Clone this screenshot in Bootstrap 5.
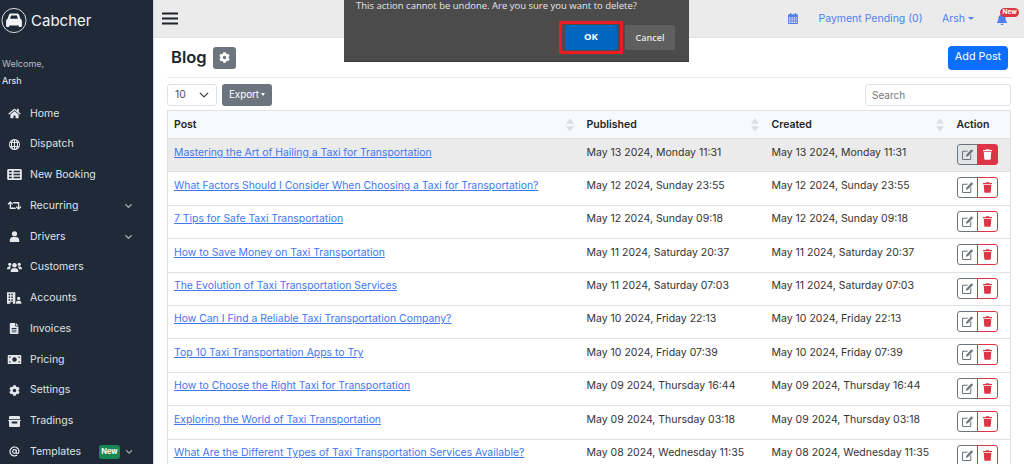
<!DOCTYPE html>
<html lang="en">
<head>
<meta charset="utf-8">
<title>Blog</title>
<link href="https://cdn.jsdelivr.net/npm/bootstrap@5.3.0/dist/css/bootstrap.min.css" rel="stylesheet">
<style>
html,body{height:464px;overflow:hidden}
body{font-family:"Inter","Liberation Sans",sans-serif;font-size:10.5px;color:#212529;background:#fff}
.shell{height:464px}
.side{width:154px;flex:none;background:#1f2937;color:#e5e7eb;border-right:1px solid #d8d8d8;overflow:hidden}
.side > *{flex:none}
.brand{height:38px;padding:2px 0 0 1px;gap:4px;color:#f3f4f6;font-size:15px;line-height:1}
.welcome{padding:17px 0 0 2px;font-size:9px;line-height:17px;color:#b9bdc4}
.who{color:#eef0f2}
.menu{margin-top:9px}
.mitem{height:30.77px;flex:none;padding-left:7px;color:#dfe2e6;font-size:10.5px}
.mico{width:15px;height:11px;flex:none;margin-right:8px;fill:#e5e7eb}
.mico.tiny{height:9px}
.mico.tall{height:12px}
.chev{margin-left:auto;margin-right:20px;width:9px;height:9px;fill:none;stroke:#9ca3af;stroke-width:1.5}
.newtag{background:#198754;color:#fff;font-size:7.5px;font-weight:700;padding:3px 0;border-radius:3px;line-height:1.1;margin-left:18px;width:23px;text-align:center}
.newtag + .chev{margin-left:5px}
.mainp{min-width:0}
.topb{height:38px;flex:none;background:#ebebeb;border-bottom:1px solid #e2e3e6;padding-left:8px;color:#4f7ff0;font-size:10.5px}
.burger{width:16px;height:13px;stroke:#1f2328;stroke-width:2}
.tcal{width:10px;height:11px;fill:#4f7ff0;margin-left:auto}
.tpay{margin-left:20.5px}
.tuser{margin-left:19.5px}
.caretd{display:inline-block;border-top:3.5px solid #4f7ff0;border-left:3.5px solid transparent;border-right:3.5px solid transparent;margin-left:3px;vertical-align:2px}
.tbell{margin-left:23px;margin-right:17px;position:relative;width:10px;height:12px}
.tbell svg{width:10px;height:12px;fill:#4f7ff0;display:block}
.newdot{position:absolute;left:3px;top:-5px;background:#dc3545;color:#fff;font-size:6.5px;font-weight:700;padding:1.5px 2.5px;border-radius:5px;line-height:1}
.work{padding:0 13px 0 13px;overflow:hidden}
.headrow{height:40px;border-bottom:1px solid #e9ecef;padding:0 3px 0 4px}
.ttl{font-size:16.5px;font-weight:600;margin:0;line-height:1;color:#212529}
.gearb{width:23px;height:22px;padding:0;margin-left:6px;background:#6c757d;border-radius:3px;border:0}
.gearb svg{width:11px;height:11px;fill:#fff}
.addb{font-size:10.8px;padding:0;width:60px;height:24px;border-radius:4px;margin-left:auto;background:#0d6efd;border:0;color:#fff}
.tools{height:32px;padding-top:6px}
.pick{width:50px;height:22px;font-size:10.5px;padding:0 0 0 7px;border-radius:3px;color:#555;background-position:right 6px center;background-size:12px 10px;border-color:#dee2e6}
.expb{height:22px;width:50px;margin-left:5px;padding:0;font-size:9.8px;background:#6c757d;border:0;border-radius:3px;color:#fff}
.expb::after{margin-left:2px;vertical-align:2px;border-top-width:3px;border-left-width:2.5px;border-right-width:2.5px}
.srch{width:146px;height:22px;font-size:10px;padding:0 6px;margin-left:auto;border-radius:3px;border-color:#dee2e6}
.srch::placeholder{color:#777}
.blogt{width:844px;table-layout:fixed;margin:0;font-size:10.5px;border:1px solid #dee2e6;--bs-table-bg:transparent}
.blogt th{height:28px;padding:0 6px;background:#f8f9fa;font-weight:600;vertical-align:middle;position:relative;font-size:10.5px;border-bottom:1px solid #dee2e6}
.blogt td{height:33.4px;padding:5.5px 6px 0;vertical-align:top;color:#333;border-bottom:1px solid #dee2e6}
.blogt td a{color:#3f76f2;line-height:14px;font-size:10.4px}
.blogt tr.hot td{background:#ebebeb}
.sorter{position:absolute;right:7px;top:7px;width:8px;height:14px;fill:#dcdfe2}
.acts{margin-top:-.5px;display:flex}
.eb,.db{width:21px;height:21px;padding:0;display:flex;align-items:center;justify-content:center;background:#fff}
.eb{border:1px solid #6c757d;border-radius:3px 0 0 3px}
.db{border:1px solid #dc3545;border-left-width:1px;border-radius:0 3px 3px 0;margin-left:-1px}
.eb svg{width:11px;height:11px;fill:#6c757d}
.db svg{width:9px;height:11px;fill:#dc3545}
.hot .eb{background:#e4e5e6}
.hot .db{background:#dc3545}
.hot .db svg{fill:#fff}
.dlg{position:absolute;left:344px;top:0;width:345px;height:62px;background:#4b4b4b;color:#e6e6e6;font-family:"Open Sans","Liberation Sans",sans-serif;font-size:9.5px;border-bottom:1px solid #3a3a3a;z-index:5}
.dlgmsg{padding:0 0 0 12px;height:21px;line-height:12px}
.dlgbtns{padding:0 14px 0 0;justify-content:flex-end}
.okring{border:3px solid #ec1c24;padding:1px 3px;height:33px;margin-right:2px}
.okb{width:52px;height:25px;background:#0067c0;color:#fff;font-size:9.5px;font-weight:700;border:0;padding:0;border-radius:2px}
.canb{width:50px;height:25px;margin-top:4px;background:#5f5f5f;color:#e8e8e8;font-size:9px;font-weight:600;border:0;padding:0;border-radius:2px}
</style>
</head>
<body>
<svg width="0" height="0" class="position-absolute">
<defs>
<symbol id="i-home" viewBox="0 0 576 512"><path d="M280.37 148.26L96 300.11V464a16 16 0 0 0 16 16l112.06-.29a16 16 0 0 0 15.92-16V368a16 16 0 0 1 16-16h64a16 16 0 0 1 16 16v95.64a16 16 0 0 0 16 16.05L464 480a16 16 0 0 0 16-16V300L295.67 148.26a12.19 12.19 0 0 0-15.3 0zM571.6 251.47L488 182.56V44.05a12 12 0 0 0-12-12h-56a12 12 0 0 0-12 12v72.61L318.47 43a48 48 0 0 0-61 0L4.34 251.47a12 12 0 0 0-1.6 16.9l25.5 31A12 12 0 0 0 45.15 301l235.22-193.74a12.19 12.19 0 0 1 15.3 0L530.9 301a12 12 0 0 0 16.9-1.6l25.5-31a12 12 0 0 0-1.7-16.93z"/></symbol>
<symbol id="i-globe" viewBox="1 1 14 14"><path fill-rule="evenodd" d="M8 1a7 7 0 1 0 0 14A7 7 0 0 0 8 1zM7.3 2.6v2.3H5.2c.4-1 1.2-2 2.1-2.3zm1.4 0c.9.3 1.7 1.3 2.1 2.3H8.7zM3 4.9l1-1.2c-.1.4-.2.8-.3 1.2zm9.2 0c-.1-.4-.2-.8-.4-1.2L13 4.9zM2.3 6.2h1.2v3.6H2.3zm2.6 0h2.4v3.6H4.9zm3.8 0h2.4v3.6H8.7zm3.800 0h1.200v3.600h-1.200zM3 11.100h.7c.1.4.2.8.3 1.200zm2.200 0h2.100v2.300c-.9-.3-1.700-1.300-2.100-2.300zm3.500 0h2.100c-.4 1-1.200 2-2.100 2.300zm3.500 0h.8l-1 1.200c.1-.4.1-.8.2-1.200z"/></symbol>
<symbol id="i-list" viewBox="0 1 16 12"><path fill-rule="evenodd" d="M1.500 1h13A1.500 1.500 0 0 1 16 2.500v9a1.500 1.500 0 0 1-1.500 1.500h-13A1.500 1.500 0 0 1 0 11.500v-9A1.500 1.500 0 0 1 1.500 1zM2 3v1.600h3V3zm5 0v1.600h7V3zM2 6.200v1.600h3V6.200zm5 0v1.600h7V6.200zM2 9.400V11h3V9.400zm5 0V11h7V9.400z"/></symbol>
<symbol id="i-retweet" viewBox="0 0 640 512"><path d="M629.657 343.598L528.971 444.284c-9.373 9.372-24.568 9.372-33.941 0L394.343 343.598c-9.373-9.373-9.373-24.569 0-33.941l10.823-10.823c9.562-9.562 25.133-9.34 34.419.492L480 342.118V160H292.451a24.005 24.005 0 0 1-16.971-7.029l-16-16C244.361 121.851 255.069 96 276.451 96H520c13.255 0 24 10.745 24 24v222.118l40.416-43.792c9.285-9.831 24.856-10.054 34.419-.492l10.823 10.823c9.372 9.372 9.372 24.569-.001 33.941zm-265.138 15.431A23.999 23.999 0 0 0 347.548 352H160V169.881l40.416 43.792c9.286 9.831 24.856 10.054 34.419.491l10.822-10.822c9.373-9.373 9.373-24.569 0-33.941L144.971 67.716c-9.373-9.373-24.569-9.373-33.941 0L10.343 168.402c-9.373 9.373-9.373 24.569 0 33.941l10.822 10.822c9.562 9.562 25.133 9.34 34.419-.491L96 169.881V392c0 13.255 10.745 24 24 24h243.549c21.382 0 32.09-25.851 16.971-40.971l-16.001-16z"/></symbol>
<symbol id="i-user" viewBox="0 0 14 14"><circle cx="7" cy="3.500" r="3.300"/><path d="M1 14v-2.500C1 9.500 2.800 7.700 4.700 7.700h4.600C11.200 7.700 13 9.500 13 11.500V14z"/></symbol>
<symbol id="i-users" viewBox="0 0 18 14"><circle cx="9" cy="5" r="2.700"/><circle cx="3.300" cy="3.800" r="1.900"/><circle cx="14.700" cy="3.800" r="1.900"/><path d="M4.500 13v-1.500C4.500 9.800 5.800 8.500 7.300 8.500h3.400c1.500 0 2.800 1.300 2.800 3V13zM0 9.500C0 7.700 1 6.500 2.500 6.500h1.600c.4 0 .8.100 1.100.3C4.300 7.600 3.700 8.500 3.500 9.800H0zM18 9.500c0-1.800-1-3-2.500-3h-1.600c-.4 0-.8.100-1.100.3.900.8 1.500 1.700 1.700 3H18z"/></symbol>
<symbol id="i-build" viewBox="0 0 18 14"><path fill-rule="evenodd" d="M0 0h10v14H7v-2.500H4V14H0zM2 2v1.800h1.800V2zm3.200 0v1.800H7V2zM2 5.200V7h1.800V5.200zm3.200 0V7H7V5.200zM2 8.400v1.800h1.800V8.400zm3.200 0v1.800H7V8.400z"/><circle cx="14" cy="7.500" r="2"/><path d="M10.800 14v-1.500c0-1.300 1-2.300 2.200-2.300h2c1.200 0 2.200 1 2.200 2.300V14z"/></symbol>
<symbol id="i-file" viewBox="0 0 12 14"><path fill-rule="evenodd" d="M1.200 0H7v3.800c0 .4.300.7.700.7H11v8.300c0 .7-.5 1.200-1.200 1.200H1.200C.5 14 0 13.500 0 12.800V1.200C0 .5.500 0 1.200 0zM8 0l3 3.500H8zM2.500 6.500v1h6v-1zm0 2.200v1h6v-1zm0 2.200v1h6v-1z"/></symbol>
<symbol id="i-money" viewBox="0 0 18 12"><path fill-rule="evenodd" d="M1 0h16a1 1 0 0 1 1 1v10a1 1 0 0 1-1 1H1a1 1 0 0 1-1-1V1a1 1 0 0 1 1-1zm8 3a3 3 0 1 0 0 6 3 3 0 0 0 0-6zM2 2v2a2 2 0 0 0 2-2zm12 0a2 2 0 0 0 2 2V2zM2 8v2h2a2 2 0 0 0-2-2zm14 0a2 2 0 0 0-2 2h2z"/></symbol>
<symbol id="i-gear" viewBox="0 0 512 512"><path d="M487.4 315.7l-42.6-24.6c4.3-23.2 4.3-47 0-70.2l42.6-24.6c4.9-2.8 7.1-8.6 5.5-14-11.1-35.6-30-67.8-54.7-94.6-3.8-4.1-10-5.1-14.8-2.3L380.8 110c-17.9-15.4-38.5-27.3-60.8-35.1V25.800c0-5.600-3.900-10.500-9.400-11.700-36.700-8.200-74.300-7.800-109.200 0-5.500 1.200-9.400 6.100-9.400 11.700V75c-22.200 7.900-42.800 19.800-60.800 35.100L88.700 85.500c-4.900-2.800-11-1.900-14.800 2.300-24.700 26.700-43.600 58.900-54.700 94.600-1.700 5.400.6 11.200 5.500 14L67.300 221c-4.300 23.200-4.300 47 0 70.200l-42.600 24.600c-4.900 2.800-7.100 8.600-5.500 14 11.100 35.600 30 67.800 54.700 94.600 3.800 4.100 10 5.100 14.800 2.300l42.600-24.600c17.900 15.400 38.500 27.300 60.800 35.100v49.200c0 5.600 3.900 10.500 9.400 11.700 36.700 8.200 74.300 7.800 109.200 0 5.500-1.200 9.400-6.100 9.400-11.700v-49.200c22.200-7.900 42.800-19.800 60.800-35.100l42.600 24.600c4.900 2.800 11 1.900 14.800-2.300 24.700-26.700 43.600-58.900 54.700-94.600 1.500-5.500-.7-11.300-5.600-14.100zM256 336c-44.100 0-80-35.900-80-80s35.900-80 80-80 80 35.900 80 80-35.900 80-80 80z"/></symbol>
<symbol id="i-store" viewBox="0 0 16 14"><path fill-rule="evenodd" d="M2.500 0h11a1.500 1.500 0 0 1 1.500 1.500V4H1V1.500A1.500 1.500 0 0 1 2.500 0zM0 5h16v1.500h-1v6A1.500 1.500 0 0 1 13.500 14h-11A1.500 1.500 0 0 1 1 12.500v-6H0zm4.500 2v2.500h7V7z"/></symbol>
<symbol id="i-at" viewBox="0 0 16 16"><path fill="none" stroke="#e5e7eb" stroke-width="1.800" d="M10.600 8a2.600 2.600 0 1 1-5.200 0 2.600 2.600 0 0 1 5.200 0zM10.600 5.300V9c0 1.200.7 1.800 1.600 1.800 1.300 0 2.300-1.200 2.300-2.800A6.500 6.500 0 1 0 12 13.100"/></symbol>
<symbol id="i-cal" viewBox="0 0 12 13"><path fill-rule="evenodd" d="M2.500 0h1.500v1.500h4V0h1.500v1.500h1.300C11.500 1.500 12 2 12 2.700v9.100c0 .7-.5 1.200-1.200 1.200H1.200C.5 13 0 12.500 0 11.800V2.700c0-.7.500-1.200 1.200-1.200h1.300zM1 5v1.500h2V5zm3 0v1.500h1.800V5zm2.800 0v1.500H8.700V5zm2.900 0v1.500H11V5zM1 7.500V9h2V7.500zm3 0V9h1.800V7.500zm2.800 0V9H8.700V7.500zm2.900 0V9H11V7.500zM1 10v1.800h2V10zm3 0v1.800h1.800V10zm2.800 0v1.800H8.700V10zm2.900 0v1.800H11V10z"/></symbol>
<symbol id="i-bell" viewBox="0 0 14 16"><path d="M7 0c.6 0 1 .4 1 1v.7c2.300.4 4 2.400 4 4.800 0 3.700 1 4.800 2 5.900v1.100H0v-1.100c1-1.100 2-2.200 2-5.900 0-2.400 1.700-4.400 4-4.800V1c0-.6.400-1 1-1zM5 14.500h4a2 2 0 0 1-4 0z"/></symbol>
<symbol id="i-edit" viewBox="0 0 16 16"><path d="M14.600.9l.8.800a1.500 1.500 0 0 1 0 2.100L8.600 10.600l-3 .7.700-3L13 1.100a1.100 1.100 0 0 1 1.600-.2z"/><path d="M1.800 2.500H9l-1.500 1.500H2.200a.7.700 0 0 0-.7.700v9c0 .4.300.8.700.8h9c.4 0 .8-.4.800-.8V8.500l1.500-1.500v7a2 2 0 0 1-1.800 2H1.800A1.800 1.800 0 0 1 0 14.200V4.300a1.800 1.800 0 0 1 1.800-1.800z"/></symbol>
<symbol id="i-trash" viewBox="0 0 12 14"><path d="M4 0h4l.6 1H12v1.500H0V1h3.400zM1 3.500h10l-.7 9.400c0 .6-.6 1.100-1.200 1.100H2.900c-.6 0-1.200-.5-1.200-1.100z"/></symbol>
<symbol id="i-sort" viewBox="0 0 7 12"><path d="M3.500 0L7 5H0zM3.500 12L0 7h7z"/></symbol>
</defs>
</svg>

<div class="shell d-flex">
  <aside class="side d-flex flex-column">
    <div class="brand d-flex align-items-center">
      <svg width="26" height="27" viewBox="0 0 28 28"><circle cx="14" cy="14" r="13" fill="none" stroke="#e5e7eb" stroke-width="1"/><path fill="#f3f4f6" d="M10.500 6.500h7c1 0 1.700.6 2 1.500l1.300 4c1 .4 1.700 1.300 1.700 2.500V20c0 .6-.4 1-1 1h-1.500c-.6 0-1-.4-1-1v-.5H9V20c0 .6-.4 1-1 1H6.500c-.6 0-1-.4-1-1v-5.500c0-1.200.7-2.100 1.700-2.500l1.300-4c.3-.9 1-1.500 2-1.500zM10.800 8.500L9.800 12h8.400l-1-3.500z"/></svg>
      <span>Cabcher</span>
    </div>
    <div class="welcome">Welcome,<div class="who">Arsh</div></div>
    <nav class="menu d-flex flex-column">
      <a class="mitem d-flex align-items-center text-decoration-none"><svg class="mico"><use href="#i-home"/></svg>Home</a>
      <a class="mitem d-flex align-items-center text-decoration-none"><svg class="mico"><use href="#i-globe"/></svg>Dispatch</a>
      <a class="mitem d-flex align-items-center text-decoration-none"><svg class="mico"><use href="#i-list"/></svg>New Booking</a>
      <a class="mitem d-flex align-items-center text-decoration-none"><svg class="mico"><use href="#i-retweet"/></svg>Recurring<svg class="chev" viewBox="0 0 10 10"><path d="M1.500 3.500L5 7l3.500-3.500"/></svg></a>
      <a class="mitem d-flex align-items-center text-decoration-none"><svg class="mico"><use href="#i-user"/></svg>Drivers<svg class="chev" viewBox="0 0 10 10"><path d="M1.500 3.500L5 7l3.500-3.500"/></svg></a>
      <a class="mitem d-flex align-items-center text-decoration-none"><svg class="mico tall"><use href="#i-users"/></svg>Customers</a>
      <a class="mitem d-flex align-items-center text-decoration-none"><svg class="mico tall"><use href="#i-build"/></svg>Accounts</a>
      <a class="mitem d-flex align-items-center text-decoration-none"><svg class="mico"><use href="#i-file"/></svg>Invoices</a>
      <a class="mitem d-flex align-items-center text-decoration-none"><svg class="mico tiny"><use href="#i-money"/></svg>Pricing</a>
      <a class="mitem d-flex align-items-center text-decoration-none"><svg class="mico"><use href="#i-gear"/></svg>Settings</a>
      <a class="mitem d-flex align-items-center text-decoration-none"><svg class="mico"><use href="#i-store"/></svg>Tradings</a>
      <a class="mitem d-flex align-items-center text-decoration-none"><svg class="mico"><use href="#i-at"/></svg>Templates<span class="newtag">New</span><svg class="chev" viewBox="0 0 10 10"><path d="M1.500 3.500L5 7l3.500-3.500"/></svg></a>
    </nav>
  </aside>
  <div class="mainp flex-grow-1 d-flex flex-column">
    <header class="topb d-flex align-items-center">
      <svg class="burger" viewBox="0 0 16 13"><path d="M0 1.500h16M0 6.500h16M0 11.500h16"/></svg>
      <svg class="tcal"><use href="#i-cal"/></svg>
      <span class="tpay">Payment Pending (0)</span>
      <span class="tuser">Arsh<i class="caretd"></i></span>
      <span class="tbell"><svg><use href="#i-bell"/></svg><span class="newdot">New</span></span>
    </header>
    <main class="work flex-grow-1">
      <div class="headrow d-flex align-items-center">
        <h1 class="ttl">Blog</h1>
        <button class="gearb d-flex align-items-center justify-content-center" type="button"><svg><use href="#i-gear"/></svg></button>
        <button class="addb" type="button">Add Post</button>
      </div>
      <div class="tools d-flex align-items-start">
        <select class="form-select pick"><option>10</option></select>
        <button class="btn dropdown-toggle expb" type="button">Export</button>
        <input class="form-control srch" placeholder="Search">
      </div>
      <table class="table blogt">
        <colgroup><col style="width:413px"><col style="width:185px"><col style="width:185px"><col></colgroup>
        <thead><tr>
          <th>Post<svg class="sorter"><use href="#i-sort"/></svg></th>
          <th>Published<svg class="sorter"><use href="#i-sort"/></svg></th>
          <th>Created<svg class="sorter"><use href="#i-sort"/></svg></th>
          <th>Action</th>
        </tr></thead>
        <tbody>
          <tr class="hot"><td><a href="#">Mastering the Art of Hailing a Taxi for Transportation</a></td><td>May 13 2024, Monday 11:31</td><td>May 13 2024, Monday 11:31</td><td><div class="acts"><span class="eb"><svg><use href="#i-edit"/></svg></span><span class="db"><svg><use href="#i-trash"/></svg></span></div></td></tr>
          <tr><td><a href="#">What Factors Should I Consider When Choosing a Taxi for Transportation?</a></td><td>May 12 2024, Sunday 23:55</td><td>May 12 2024, Sunday 23:55</td><td><div class="acts"><span class="eb"><svg><use href="#i-edit"/></svg></span><span class="db"><svg><use href="#i-trash"/></svg></span></div></td></tr>
          <tr><td><a href="#">7 Tips for Safe Taxi Transportation</a></td><td>May 12 2024, Sunday 09:18</td><td>May 12 2024, Sunday 09:18</td><td><div class="acts"><span class="eb"><svg><use href="#i-edit"/></svg></span><span class="db"><svg><use href="#i-trash"/></svg></span></div></td></tr>
          <tr><td><a href="#">How to Save Money on Taxi Transportation</a></td><td>May 11 2024, Saturday 20:37</td><td>May 11 2024, Saturday 20:37</td><td><div class="acts"><span class="eb"><svg><use href="#i-edit"/></svg></span><span class="db"><svg><use href="#i-trash"/></svg></span></div></td></tr>
          <tr><td><a href="#">The Evolution of Taxi Transportation Services</a></td><td>May 11 2024, Saturday 07:03</td><td>May 11 2024, Saturday 07:03</td><td><div class="acts"><span class="eb"><svg><use href="#i-edit"/></svg></span><span class="db"><svg><use href="#i-trash"/></svg></span></div></td></tr>
          <tr><td><a href="#">How Can I Find a Reliable Taxi Transportation Company?</a></td><td>May 10 2024, Friday 22:13</td><td>May 10 2024, Friday 22:13</td><td><div class="acts"><span class="eb"><svg><use href="#i-edit"/></svg></span><span class="db"><svg><use href="#i-trash"/></svg></span></div></td></tr>
          <tr><td><a href="#">Top 10 Taxi Transportation Apps to Try</a></td><td>May 10 2024, Friday 07:39</td><td>May 10 2024, Friday 07:39</td><td><div class="acts"><span class="eb"><svg><use href="#i-edit"/></svg></span><span class="db"><svg><use href="#i-trash"/></svg></span></div></td></tr>
          <tr><td><a href="#">How to Choose the Right Taxi for Transportation</a></td><td>May 09 2024, Thursday 16:44</td><td>May 09 2024, Thursday 16:44</td><td><div class="acts"><span class="eb"><svg><use href="#i-edit"/></svg></span><span class="db"><svg><use href="#i-trash"/></svg></span></div></td></tr>
          <tr><td><a href="#">Exploring the World of Taxi Transportation</a></td><td>May 09 2024, Thursday 03:18</td><td>May 09 2024, Thursday 03:18</td><td><div class="acts"><span class="eb"><svg><use href="#i-edit"/></svg></span><span class="db"><svg><use href="#i-trash"/></svg></span></div></td></tr>
          <tr><td><a href="#">What Are the Different Types of Taxi Transportation Services Available?</a></td><td>May 08 2024, Wednesday 11:35</td><td>May 08 2024, Wednesday 11:35</td><td><div class="acts"><span class="eb"><svg><use href="#i-edit"/></svg></span><span class="db"><svg><use href="#i-trash"/></svg></span></div></td></tr>
        </tbody>
      </table>
    </main>
  </div>
</div>

<div class="dlg">
  <div class="dlgmsg">This action cannot be undone. Are you sure you want to delete?</div>
  <div class="dlgbtns d-flex align-items-start">
    <div class="okring"><button class="okb" type="button">OK</button></div>
    <button class="canb" type="button">Cancel</button>
  </div>
</div>
</body>
</html>
